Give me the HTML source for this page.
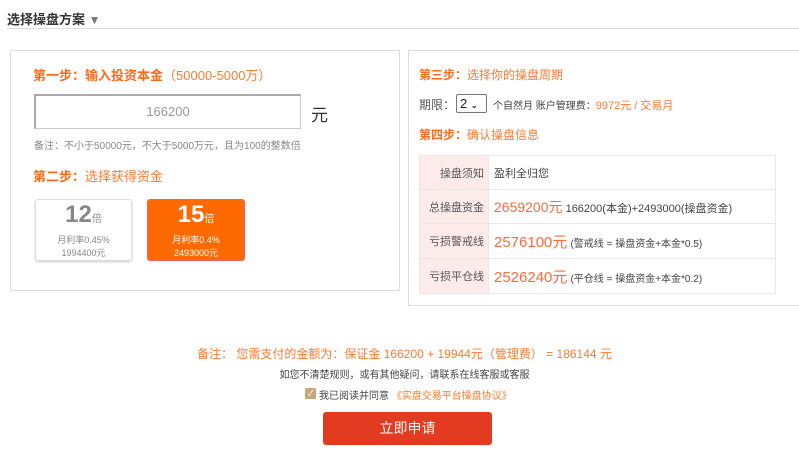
<!DOCTYPE html>
<html><head><meta charset="utf-8"><style>
*{margin:0;padding:0;box-sizing:border-box}
body{width:799px;height:461px;background:#fff;font-family:"Liberation Sans","Noto Sans CJK SC",sans-serif;position:relative;overflow:hidden;color:#333}
.a{position:absolute;white-space:nowrap}
.o{color:#ff7a2e}
.ob{color:#ff6a1a;font-weight:bold}
td{border:1px solid #e8e8e8;font-size:11px;height:34px}
td.l{background:#fdeaea;text-align:right;padding-right:4px;color:#555;width:69px}
td.v{padding-left:5px;color:#444}
.big{color:#ff6a3a;font-size:15px}
</style></head><body>
<div class="a" style="left:7px;top:9px;font-size:13px;font-weight:bold;color:#333">选择操盘方案 <span style="color:#777;font-size:12px">▼</span></div>
<div class="a" style="left:7px;top:28px;width:792px;height:1px;background:#ddd"></div>

<div class="a" style="left:10px;top:50px;width:390px;height:241px;border:1px solid #ddd"></div>
<div class="a" style="left:33px;top:65px;font-size:13px"><span class="ob">第一步：</span><span class="ob" style="color:#ff6a1a">输入投资本金</span><span class="o">（50000-5000万）</span></div>
<div class="a" style="left:34px;top:94px;width:267px;height:35px;border:1px solid #ccc;border-top:2px solid #aaa;border-left:2px solid #aaa;text-align:center;line-height:32px;color:#999;font-size:13px">166200</div>
<div class="a" style="left:311px;top:101px;font-size:17px;color:#333">元</div>
<div class="a" style="left:34px;top:137px;font-size:10px;color:#888">备注：不小于50000元，不大于5000万元，且为100的整数倍</div>
<div class="a" style="left:33px;top:166px;font-size:13px"><span class="ob">第二步：</span><span class="o">选择获得资金</span></div>
<div class="a" style="left:35px;top:199px;width:97px;height:62px;border:1px solid #ddd;border-radius:3px;text-align:center;color:#888;box-shadow:0 1px 2px #ccc">
<div style="font-size:24px;font-weight:bold;line-height:28px;margin-top:1px;color:#888">12<span style="font-size:10px;font-weight:normal">倍</span></div>
<div style="font-size:9px;line-height:12px">月利率0.45%</div><div style="font-size:9px;line-height:14px">1994400元</div></div>
<div class="a" style="left:147px;top:199px;width:98px;height:62px;border:1px solid #f06060;border-radius:3px;text-align:center;color:#fff;background:#ff6a00">
<div style="font-size:24px;font-weight:bold;line-height:28px;margin-top:1px">15<span style="font-size:10px;font-weight:normal">倍</span></div>
<div style="font-size:9px;line-height:12px">月利率0.4%</div><div style="font-size:9px;line-height:14px">2493000元</div></div>

<div class="a" style="left:408px;top:50px;width:392px;height:256px;border:1px solid #ddd"></div>
<div class="a" style="left:419px;top:66px;font-size:12px"><span class="ob">第三步：</span><span class="o">选择你的操盘周期</span></div>
<div class="a" style="left:419px;top:96px;font-size:12px;color:#555">期限：</div>
<div class="a" style="left:456px;top:94px;width:31px;height:19px;border:1px solid #777;border-radius:2px;font-size:13px;line-height:17px;padding-left:3px;color:#222">2 <span style="font-size:8px;font-weight:bold">⌄</span></div>
<div class="a" style="left:493px;top:97px;font-size:10px;color:#444">个自然月 账户管理费：<span class="o" style="font-size:11px">9972元 / 交易月</span></div>
<div class="a" style="left:419px;top:126px;font-size:12px"><span class="ob">第四步：</span><span class="o">确认操盘信息</span></div>
<table class="a" style="left:419px;top:155px;width:357px;border-collapse:collapse">
<tr><td class="l" style="height:32px">操盘须知</td><td class="v">盈利全归您</td></tr>
<tr><td class="l">总操盘资金</td><td class="v"><span class="big" style="font-size:14px">2659200元</span> 166200(本金)+2493000(操盘资金)</td></tr>
<tr><td class="l" style="height:35px">亏损警戒线</td><td class="v"><span class="big">2576100元</span> <span style="font-size:10px">(警戒线 = 操盘资金+本金*0.5)</span></td></tr>
<tr><td class="l" style="height:35px">亏损平仓线</td><td class="v"><span class="big">2526240元</span> <span style="font-size:10px">(平仓线 = 操盘资金+本金*0.2)</span></td></tr>
</table>

<div class="a" style="left:0;width:799px;text-align:center;top:345px;font-size:12px;color:#ff7a2e;padding-left:10px">备注： 您需支付的金额为：保证金 166200 + 19944元（管理费） = 186144 元</div>
<div class="a" style="left:0;width:799px;text-align:center;top:366px;font-size:10px;color:#444;padding-left:10px">如您不清楚规则，或有其他疑问，请联系在线客服或客服</div>
<div class="a" style="left:305px;top:388px;width:11px;height:11px;background:#c8a878;border-radius:1px;color:#fff;font-size:8px;line-height:11px;text-align:center">✓</div>
<div class="a" style="left:319px;top:387px;font-size:10px;color:#444">我已阅读并同意 <span class="o">《实盘交易平台操盘协议》</span></div>
<div class="a" style="left:323px;top:412px;width:169px;height:33px;background:#e33a22;border-radius:3px;color:#fff;text-align:center;line-height:33px;font-size:14px">立即申请</div>
</body></html>
